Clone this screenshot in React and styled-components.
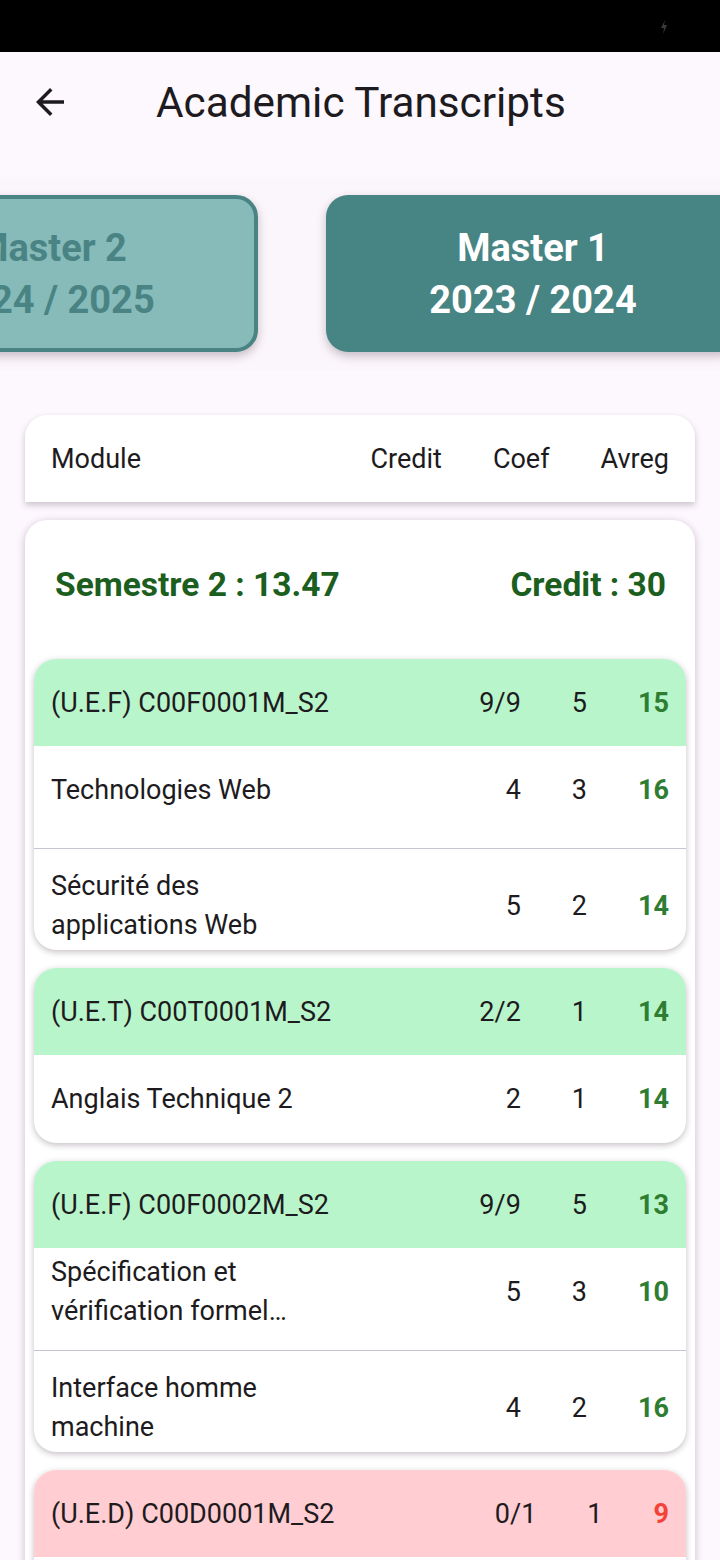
import React from 'react';
import styled, { createGlobalStyle } from 'styled-components';

const GlobalStyle = createGlobalStyle`
  html, body {
    margin: 0;
    padding: 0;
    background: #fdf7fe;
  }
  * {
    box-sizing: border-box;
  }
`;

const years = [
  { level: 'Master 2', period: '2024 / 2025', active: false },
  { level: 'Master 1', period: '2023 / 2024', active: true },
];

const units = [
  {
    code: '(U.E.F) C00F0001M_S2',
    credit: '9/9',
    coef: '5',
    avg: '15',
    passed: true,
    modules: [
      { name: 'Technologies Web', credit: '4', coef: '3', avg: '16' },
      { name: 'Sécurité des applications Web', credit: '5', coef: '2', avg: '14' },
    ],
  },
  {
    code: '(U.E.T) C00T0001M_S2',
    credit: '2/2',
    coef: '1',
    avg: '14',
    passed: true,
    modules: [{ name: 'Anglais Technique 2', credit: '2', coef: '1', avg: '14' }],
  },
  {
    code: '(U.E.F) C00F0002M_S2',
    credit: '9/9',
    coef: '5',
    avg: '13',
    passed: true,
    modules: [
      { name: 'Spécification et vérification formelle des systèmes', credit: '5', coef: '3', avg: '10' },
      { name: 'Interface homme machine', credit: '4', coef: '2', avg: '16' },
    ],
  },
  {
    code: '(U.E.D) C00D0001M_S2',
    credit: '0/1',
    coef: '1',
    avg: '9',
    passed: false,
    modules: [{ name: 'Entrepreneuriat', credit: '0', coef: '1', avg: '9' }],
  },
];

const App = () => {
  return (
    <Page>
      <GlobalStyle />
      <StatusBar>
        <svg width="8" height="14" viewBox="0 0 8 14">
          <path d="M5 0 L1 8 H4 L3 14 L7 5 H4 Z" fill="#3a3a3a" />
        </svg>
      </StatusBar>

      <AppBar>
        <BackButton aria-label="back">
          <svg width="42" height="42" viewBox="0 0 24 24">
            <path d="M20 11H7.83l5.59-5.59L12 4l-8 8 8 8 1.41-1.41L7.83 13H20v-2z" fill="#1d1b20" />
          </svg>
        </BackButton>
        <Title>Academic Transcripts</Title>
      </AppBar>

      <YearStrip>
        <YearTrack>
          {years.map((y) => (
            <YearCard key={y.period} active={y.active}>
              <span>{y.level}</span>
              <span>{y.period}</span>
            </YearCard>
          ))}
        </YearTrack>
      </YearStrip>

      <Content>
        <HeaderCard>
          <Label>Module</Label>
          <Numbers>
            <Label>Credit</Label>
            <Label>Coef</Label>
            <Label>Avreg</Label>
          </Numbers>
        </HeaderCard>

        <SemesterCard>
          <SemesterHead>
            <SemesterText>Semestre 2 : 13.47</SemesterText>
            <SemesterText>Credit : 30</SemesterText>
          </SemesterHead>

          {units.map((u) => (
            <UnitCard key={u.code}>
              <UnitHeader passed={u.passed}>
                <Label>{u.code}</Label>
                <Numbers>
                  <Label>{u.credit}</Label>
                  <Label>{u.coef}</Label>
                  <Avg passed={u.passed}>{u.avg}</Avg>
                </Numbers>
              </UnitHeader>
              {u.modules.map((m, i) => (
                <React.Fragment key={m.name}>
                  {i > 0 && <RowDivider />}
                  <ModuleRow>
                    <ModuleName>{m.name}</ModuleName>
                    <Numbers>
                      <Label>{m.credit}</Label>
                      <Label>{m.coef}</Label>
                      <Avg passed={Number(m.avg) >= 10}>{m.avg}</Avg>
                    </Numbers>
                  </ModuleRow>
                </React.Fragment>
              ))}
            </UnitCard>
          ))}
        </SemesterCard>
      </Content>
    </Page>
  );
};

const Page = styled.div`
  width: 720px;
  height: 1560px;
  overflow: hidden;
  background: #fdf7fe;
  font-family: Roboto, 'Liberation Sans', sans-serif;
  color: #1d1b20;
`;

const StatusBar = styled.div`
  height: 52px;
  background: #000;
  display: flex;
  align-items: center;
  justify-content: flex-end;
  padding-right: 52px;
  padding-top: 2px;
`;

const AppBar = styled.header`
  height: 100px;
  display: flex;
  align-items: center;
  padding-left: 20px;
`;

const BackButton = styled.button`
  width: 60px;
  height: 60px;
  border: none;
  background: none;
  padding: 0;
  display: flex;
  align-items: center;
  justify-content: center;
  margin-right: 76px;
`;

const Title = styled.h1`
  margin: 0;
  font-size: 42.3px;
  font-weight: 400;
  color: #1d1b20;
`;

const YearStrip = styled.div`
  margin-top: 25px;
  height: 193px;
  background: #fbf6fb;
  overflow: hidden;
  padding-top: 18px;
`;

const YearTrack = styled.div`
  display: flex;
  gap: 68px;
  margin-left: -156px;
`;

const YearCard = styled.div`
  flex: 0 0 414px;
  height: 157px;
  border-radius: 22px;
  display: flex;
  flex-direction: column;
  align-items: center;
  justify-content: center;
  font-size: 38px;
  font-weight: 700;
  line-height: 52px;
  background: ${({ active }) => (active ? '#478484' : '#86bbba')};
  color: ${({ active }) => (active ? '#ffffff' : '#4a8383')};
  border: ${({ active }) => (active ? 'none' : '4px solid #4a8383')};
  box-shadow: 0 4px 10px rgba(60, 40, 60, 0.28);
`;

const Content = styled.main`
  padding: 45px 25px 0;
  display: flex;
  flex-direction: column;
  gap: 18px;
`;

const HeaderCard = styled.div`
  height: 87px;
  background: #fff;
  border-radius: 22px 22px 0 0;
  display: flex;
  align-items: center;
  justify-content: space-between;
  padding: 0 26px;
  box-shadow: 0 3px 6px rgba(60, 40, 60, 0.25);
`;

const Label = styled.span`
  font-size: 27px;
  white-space: nowrap;
`;

const Numbers = styled.div`
  display: flex;
  align-items: center;
  gap: 51px;
  flex-shrink: 0;
`;

const SemesterCard = styled.section`
  background: #fff;
  border-radius: 22px;
  padding: 0 9px 18px;
  display: flex;
  flex-direction: column;
  gap: 18px;
  box-shadow: 0 2px 8px rgba(60, 40, 60, 0.28);
`;

const SemesterHead = styled.div`
  height: 121px;
  display: flex;
  align-items: center;
  justify-content: space-between;
  padding: 8px 20px 0 21px;
`;

const SemesterText = styled.span`
  font-size: 33.5px;
  font-weight: 700;
  color: #1b5e20;
`;

const UnitCard = styled.div`
  background: #fff;
  border-radius: 22px;
  overflow: hidden;
  box-shadow: 0 2px 6px rgba(60, 40, 60, 0.3);
`;

const UnitHeader = styled.div`
  height: 87px;
  display: flex;
  align-items: center;
  justify-content: space-between;
  padding: 0 17px;
  background: ${({ passed }) => (passed ? '#b9f5cb' : '#ffcdd2')};
`;

const ModuleRow = styled.div`
  height: 88px;
  display: flex;
  align-items: center;
  justify-content: space-between;
  gap: 20px;
  padding: 0 17px;
`;

const ModuleName = styled.span`
  font-size: 27px;
  line-height: 39px;
  max-width: 242px;
  display: -webkit-box;
  -webkit-line-clamp: 2;
  -webkit-box-orient: vertical;
  overflow: hidden;
`;

const RowDivider = styled.hr`
  margin: 14px 0 13px;
  border: none;
  border-top: 1px solid #cac4d0;
`;

const Avg = styled.span`
  font-size: 27px;
  font-weight: 700;
  color: ${({ passed }) => (passed ? '#2e7d32' : '#f44336')};
`;

export default App;
